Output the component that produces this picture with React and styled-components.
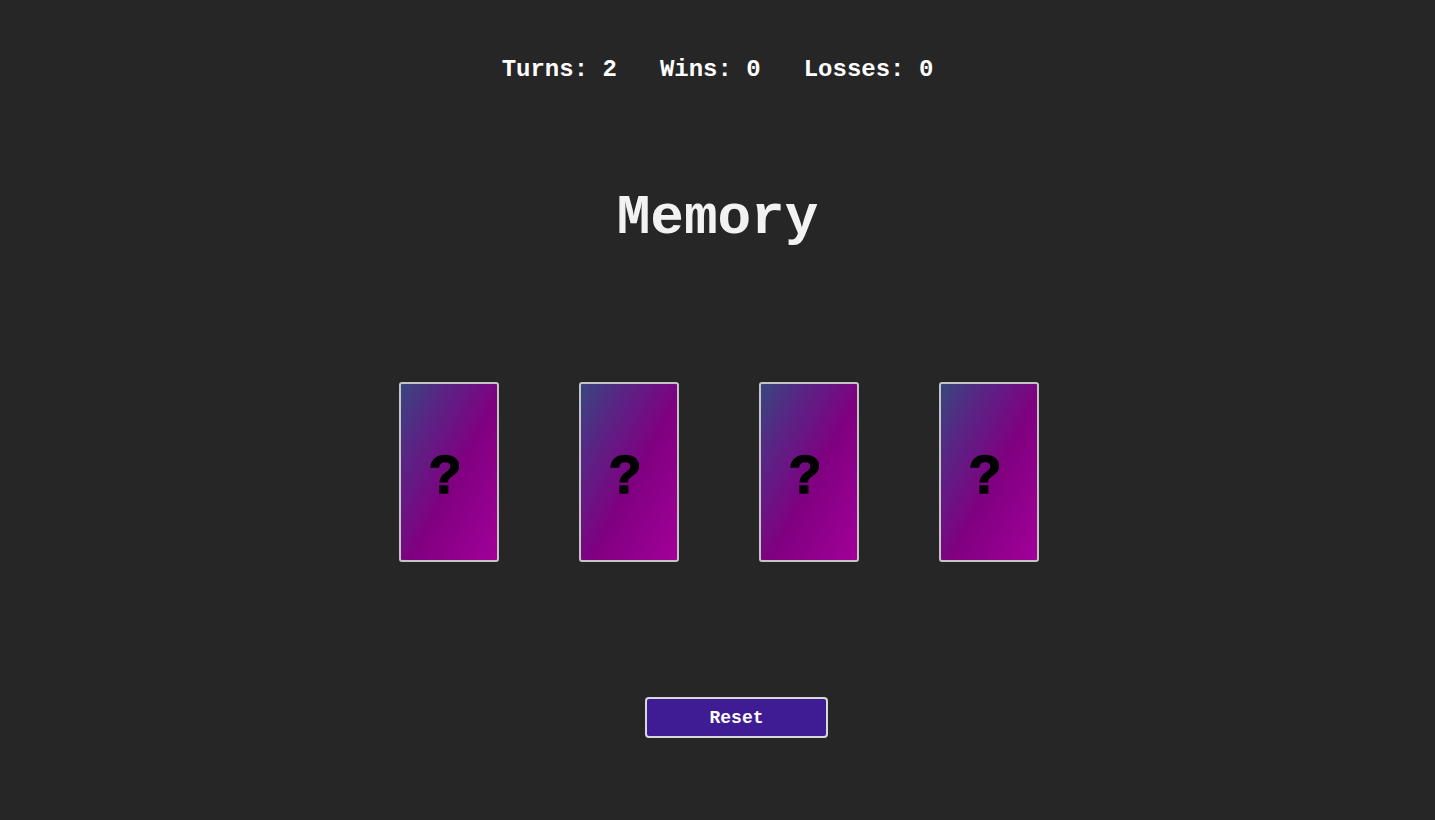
import React from "react";
import { styled, createGlobalStyle } from "styled-components";

const GlobalStyle = createGlobalStyle`
    body {
        margin: 0;
        background-color: #262626;
        font-family: "Liberation Mono", "Courier New", monospace;
    }
`;

const cards = [1, 2, 3, 4];

function App() {
    return (
        <>
            <GlobalStyle />
            <Container>
                <Stats>
                    <Stat>Turns: 2</Stat>
                    <Stat>Wins: 0</Stat>
                    <Stat>Losses: 0</Stat>
                </Stats>
                <Title>Memory</Title>
                <Board>
                    {cards.map((c) => (
                        <Card key={c}>?</Card>
                    ))}
                </Board>
                <ResetButton>Reset</ResetButton>
            </Container>
        </>
    );
}

export default App;

const Container = styled.div`
    display: flex;
    flex-direction: column;
    align-items: center;
    min-height: 820px;
    padding-top: 56px;
    box-sizing: border-box;
`;
const Stats = styled.div`
    display: flex;
    gap: 43px;
    color: #ffffff;
    font-size: 24px;
    font-weight: bold;
    line-height: 28px;
`;
const Stat = styled.span``;
const Title = styled.h1`
    margin: 102px 0 0 0;
    font-size: 56px;
    line-height: 64px;
    font-weight: bold;
    color: #f2f2f2;
`;
const Board = styled.div`
    display: flex;
    gap: 80px;
    margin-top: 132px;
    margin-left: 3px;
`;
const Card = styled.div`
    width: 100px;
    height: 180px;
    box-sizing: border-box;
    border: 2px solid #c4c4c4;
    border-radius: 3px;
    background: linear-gradient(
        to bottom right,
        #38467f 0%,
        #5a2384 25%,
        #800080 55%,
        #a2009a 100%
    );
    display: flex;
    align-items: center;
    justify-content: center;
    padding: 4px 8px 0 0;
    font-family: "Liberation Sans", Arial, sans-serif;
    font-weight: 900;
    font-size: 54px;
    color: #000000;
    -webkit-text-stroke: 1.5px #000;
`;
const ResetButton = styled.button`
    margin: 135px 0 0 38px;
    width: 183px;
    height: 41px;
    background-color: #401c94;
    border: 2px solid #d8d8d8;
    border-radius: 4px;
    color: #ffffff;
    font-family: "Liberation Mono", "Courier New", monospace;
    font-weight: bold;
    font-size: 18px;
    cursor: pointer;
`;
